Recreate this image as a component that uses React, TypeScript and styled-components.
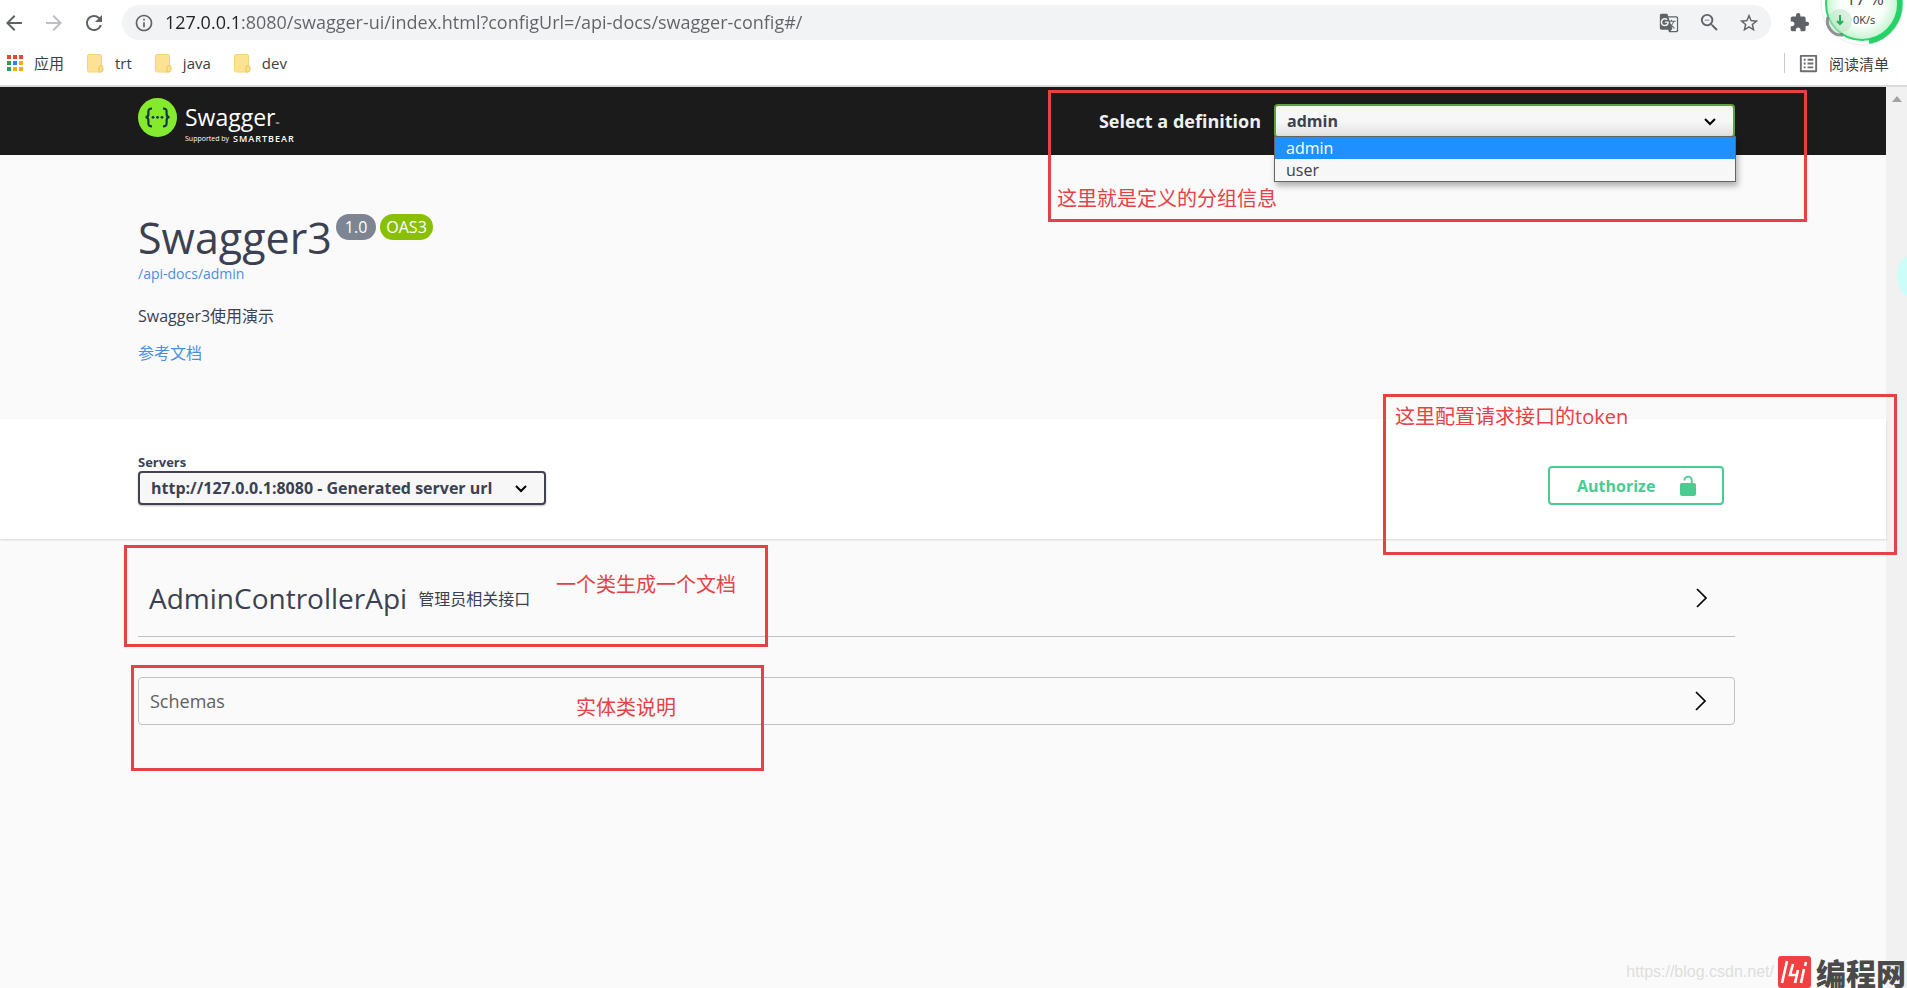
import React from 'react';
import styled, { createGlobalStyle } from 'styled-components';
import {
  MdArrowBack, MdArrowForward, MdRefresh, MdInfoOutline, MdGTranslate,
  MdOutlineZoomOut, MdStarBorder, MdExtension, MdListAlt,
} from 'react-icons/md';

const RED = '#e64145';

const GlobalStyle = createGlobalStyle`
  * { box-sizing: border-box; }
  html, body, #root { height: 100%; }
  body {
    margin: 0;
    overflow: hidden;
    background: #fafafa;
    color: #3b4151;
    font-family: "Open Sans", "Noto Sans CJK SC", sans-serif;
    font-size: 16px;
  }
  h1, h2, p, ul { margin: 0; padding: 0; font-weight: 400; }
  button, input, select { font: inherit; color: inherit; }
  a { color: #4990e2; text-decoration: none; }
`;

const Window = styled.div`
  position: relative;
  display: flex;
  flex-direction: column;
  height: 100%;
  overflow: hidden;
`;

const Chrome = styled.header`
  flex: none;
  background: #fff;
  border-bottom: 2px solid #d9dadc;
`;

const ToolbarRow = styled.div`
  display: flex;
  align-items: center;
  padding: 5px 98px 5px 4px;
`;

const IconButton = styled.button<{ $tone?: string; $gap?: number }>`
  display: flex;
  align-items: center;
  justify-content: center;
  width: 20px;
  height: 20px;
  padding: 0;
  margin-right: ${p => p.$gap ?? 0}px;
  border: 0;
  background: none;
  font-size: 20px;
  color: ${p => p.$tone ?? '#5f6368'};
  svg { flex: none; }
`;

const AddressBar = styled.div`
  flex: 1;
  display: flex;
  align-items: center;
  height: 35px;
  margin-right: 18px;
  padding: 0 12px;
  border-radius: 18px;
  background: #f1f3f4;
`;

const UrlInput = styled.input`
  flex: 1;
  min-width: 0;
  height: 26px;
  margin-bottom: 2px;
  padding: 0;
  border: 0;
  outline: 0;
  font-size: 18px;
  color: #5f6368;
  -webkit-text-fill-color: transparent;
  background: linear-gradient(90deg, #202124 0 77px, #5f6368 77px);
  -webkit-background-clip: text;
  background-clip: text;
`;

const BookmarkRow = styled.nav`
  display: flex;
  align-items: center;
  height: 40px;
  padding: 0 18px 4px 6px;
`;

const Bookmark = styled.a`
  display: flex;
  align-items: center;
  gap: 11px;
  margin-right: 23px;
  font-size: 15px;
  line-height: 20px;
  color: #3c4043;
`;

const ReadingList = styled.button`
  display: flex;
  align-items: center;
  gap: 9px;
  height: 20px;
  margin-left: auto;
  padding: 0 0 0 12px;
  border: 0;
  border-left: 1px solid #c8cacd;
  background: none;
  font-size: 15px;
  color: #3c4043;
  svg { color: #6b6e72; }
`;

const Meter = styled.svg`
  position: absolute;
  top: 0;
  right: 0;
  font-family: "Open Sans", sans-serif;
`;

const Viewport = styled.div`
  flex: 1;
  display: flex;
  min-height: 0;
`;

const Page = styled.main`
  flex: 1;
  min-width: 0;
  background: #fafafa;
`;

const Scrollbar = styled.div`
  flex: none;
  display: flex;
  justify-content: center;
  width: 21px;
  padding-top: 9px;
  background: #f1f1f1;
`;

const Section = styled.section`
  position: relative;
  padding: 0 151px 0 138px;
`;

const Topbar = styled(Section)`
  display: flex;
  align-items: center;
  justify-content: space-between;
  height: 68px;
  background: #1b1b1b;
`;

const Logo = styled.a`
  align-self: flex-start;
  display: flex;
  gap: 8px;
  padding-top: 11px;
  color: #fff;
`;

const LogoText = styled.span`
  display: flex;
  flex-direction: column;
  gap: 4px;
  padding-top: 6px;
`;

const LogoName = styled.span`
  height: 26px;
  font-size: 23px;
  line-height: 26px;
  small { font-size: 5px; line-height: 6px; }
`;

const LogoByline = styled.span`
  display: flex;
  align-items: center;
  gap: 4px;
  font-size: 7px;
  line-height: 9px;
  b { font-size: 9px; font-weight: 600; letter-spacing: 1px; }
`;

const DefinitionField = styled.div`
  display: flex;
  align-items: center;
  gap: 13px;
  label { font-size: 18px; font-weight: 700; line-height: 24px; color: #f0f0f0; }
`;

const SelectBox = styled.div<{ $width: number }>`
  position: relative;
  width: ${p => p.$width}px;
`;

const Select = styled.select<{ $edge: string; $shaded?: boolean }>`
  appearance: none;
  display: block;
  width: 100%;
  height: 34px;
  padding: 0 40px 0 11px;
  border: 2px solid ${p => p.$edge};
  border-radius: 4px;
  background: ${p => (p.$shaded ? 'linear-gradient(#f7f7f7 50%, #e2e2e2)' : '#f7f7f7')};
  box-shadow: 0 1px 2px rgba(0, 0, 0, 0.25);
  font-weight: 700;
  color: #3b4151;
`;

const SelectArrow = styled.svg`
  position: absolute;
  top: 14px;
  right: 19px;
  pointer-events: none;
`;

const Menu = styled.ul`
  position: absolute;
  z-index: 2;
  top: 32px;
  left: 0;
  right: -1px;
  list-style: none;
  border: 1px solid #646464;
  background: #f7f7f7;
  box-shadow: 2px 4px 6px rgba(0, 0, 0, 0.3);
`;

const MenuItem = styled.li<{ $active?: boolean }>`
  padding: 0 11px;
  line-height: 22px;
  color: ${p => (p.$active ? '#fff' : '#3b4151')};
  background: ${p => (p.$active ? '#1e90ff' : 'transparent')};
`;

const Info = styled(Section)`
  display: flex;
  flex-direction: column;
  align-items: flex-start;
  height: 264px;
  padding-top: 56px;
  line-height: 24px;
`;

const TitleRow = styled.div`
  display: flex;
  align-items: flex-start;
  gap: 4px;
  h1 { font-size: 43px; line-height: 53px; }
`;

const Badge = styled.span<{ $fill: string; $pad: number }>`
  margin-top: 3px;
  padding: 0 ${p => p.$pad}px;
  border-radius: 13px;
  background: ${p => p.$fill};
  line-height: 26px;
  color: #fff;
`;

const SpecLink = styled.a`
  margin-bottom: 20px;
  font-size: 14px;
  line-height: 20px;
`;

const Description = styled.p`
  margin-bottom: 13px;
`;

const SchemeBar = styled(Section)`
  display: flex;
  align-items: flex-start;
  justify-content: space-between;
  height: 120px;
  padding-top: 34px;
  background: #fff;
  box-shadow: 0 1px 2px rgba(0, 0, 0, 0.15);
`;

const ServerField = styled.div`
  label { display: block; font-size: 13px; font-weight: 700; line-height: 18px; }
`;

const AuthorizeButton = styled.button`
  display: flex;
  align-items: center;
  justify-content: space-between;
  width: 176px;
  height: 39px;
  margin: 13px 11px 0 0;
  padding: 0 26px 0 27px;
  border: 2px solid #49cc90;
  border-radius: 4px;
  background: transparent;
  font-weight: 700;
  color: #49cc90;
`;

const Operations = styled(Section)`
  padding-top: 24px;
`;

const TagRow = styled.button`
  display: flex;
  align-items: center;
  width: 100%;
  height: 74px;
  padding: 0 27px 3px 11px;
  border: 0;
  border-bottom: 1px solid #bfc1c5;
  background: none;
  text-align: left;
  svg { margin-left: auto; }
`;

const TagName = styled.span`
  margin-right: 11px;
  font-size: 28px;
  line-height: 40px;
`;

const Schemas = styled(Section)`
  padding-top: 40px;
`;

const SchemasBox = styled.button`
  display: flex;
  align-items: center;
  justify-content: space-between;
  width: 100%;
  height: 48px;
  padding: 0 27px 0 11px;
  border: 1px solid #bfc1c5;
  border-radius: 4px;
  background: none;
  font-size: 18px;
  color: #606060;
`;

/* Red review notes drawn over the page. */
const Note = styled.div<{ $x: number; $y: number; $w: number; $h: number; $px: number; $py: number; $right?: boolean }>`
  position: absolute;
  z-index: 3;
  top: ${p => p.$y}px;
  ${p => (p.$right ? 'right' : 'left')}: ${p => p.$x}px;
  width: ${p => p.$w}px;
  height: ${p => p.$h}px;
  padding: ${p => p.$py}px 0 0 ${p => p.$px}px;
  border: 3px solid ${RED};
  font-size: 20px;
  line-height: 30px;
  color: ${RED};
  pointer-events: none;
`;

const EdgeTab = styled.div`
  position: absolute;
  top: 253px;
  right: -32px;
  width: 42px;
  height: 46px;
  border-radius: 23px;
  background: #cdfdf8;
`;

const Watermark = styled.footer`
  position: absolute;
  right: 0;
  bottom: 0;
  display: flex;
  align-items: center;
  line-height: 32px;
`;

const WatermarkUrl = styled.span`
  margin-right: 4px;
  font-family: "Liberation Sans", sans-serif;
  font-size: 16px;
  color: #dedede;
`;

const WatermarkBrand = styled.span`
  padding: 0 1px 0 5px;
  font-family: "Noto Sans CJK SC", sans-serif;
  font-size: 30px;
  font-weight: 900;
  color: #4a4a4a;
`;

const FolderIcon = () => (
  <svg width="17" height="19" viewBox="0 0 17 19" aria-hidden="true">
    <rect x="0.5" y="0.5" width="14" height="17.5" rx="1.5" fill="#fde293" stroke="#f3d679" />
    <path d="M12 18v-4.500a2 2 0 0 1 4 0V16a2 2 0 0 1-2 2z" fill="#fbe08c" stroke="#eac55c" />
  </svg>
);

const AppsIcon = () => {
  const colors = ['#e8453c', '#e8453c', '#e8453c', '#2f9e5b', '#2f80ed', '#f0a92b', '#2f9e5b', '#f0a92b', '#f0a92b'];
  return (
    <svg width="17" height="18" viewBox="0 0 17 18" aria-hidden="true">
      {colors.map((c, i) => (
        <rect key={i} x={1 + (i % 3) * 6} y={1 + Math.floor(i / 3) * 6} width="4" height="4" fill={c} />
      ))}
    </svg>
  );
};

const Chevron = () => (
  <svg width="12" height="20" viewBox="0 0 12 20" fill="none" stroke="#000" strokeWidth="1.7" aria-hidden="true">
    <path d="M1 1l9 9-9 9" />
  </svg>
);

const DownArrow = () => (
  <SelectArrow width="12" height="8" viewBox="0 0 12 8" fill="none" stroke="#000" strokeWidth="2" aria-hidden="true">
    <path d="M1 1l5 5 5-5" />
  </SelectArrow>
);

const SwaggerMark = () => (
  <svg width="39" height="39" viewBox="0 0 39 39" fill="none" aria-hidden="true">
    <circle cx="19.5" cy="19.5" r="19.5" fill="#85ea2d" />
    <g stroke="#173647" strokeWidth="2.2">
      <path d="M14 10.500c-3 0-3.600.8-3.600 3v2.500c0 2-.7 3.200-2.900 3.200 2.200 0 2.900 1.200 2.900 3.200v2.800c0 2.300.6 3.100 3.600 3.100" />
      <path d="M25 10.500c3 0 3.600.8 3.600 3v2.500c0 2 .7 3.200 2.900 3.200-2.200 0-2.900 1.200-2.900 3.200v2.800c0 2.300-.6 3.100-3.600 3.100" />
    </g>
    <g fill="#173647">
      <circle cx="15" cy="19.300" r="1.400" />
      <circle cx="19.500" cy="19.300" r="1.400" />
      <circle cx="24" cy="19.300" r="1.400" />
    </g>
  </svg>
);

const LockIcon = () => (
  <svg width="16" height="22" viewBox="0 0 16 22" aria-hidden="true">
    <path d="M4.500 5.500V4.500a3.700 3.700 0 0 1 7.200 0V9" fill="none" stroke="#49cc90" strokeWidth="1.800" />
    <rect y="8" width="16" height="13" rx="2" fill="#49cc90" />
  </svg>
);

const SpeedMeter = () => (
  <Meter width="92" height="48" viewBox="1815 0 92 48" role="img" aria-label="Network speed">
    <defs>
      <radialGradient id="dial">
        <stop offset="0.6" stopColor="#fbfffb" />
        <stop offset="1" stopColor="#c4f4d0" />
      </radialGradient>
    </defs>
    <circle cx="1862" cy="4" r="41" fill="#fff" stroke="#ececec" />
    <circle cx="1862" cy="4" r="36" fill="url(#dial)" stroke="#2ed36b" strokeWidth="2" />
    <circle cx="1840" cy="21" r="12" fill="#bfe3c8" fillOpacity="0.55" />
    <path d="M1828 17a14 14 0 0 0 15 18" fill="none" stroke="#77777b" strokeOpacity="0.8" strokeWidth="3" />
    <path d="M1900 0a38.500 38.500 0 0 1-31 41.500" fill="none" stroke="#22d466" strokeWidth="5" />
    <path d="M1840 15v8M1837 21l3 3 3-3" fill="none" stroke="#22b35a" strokeWidth="2" />
    <text x="1853" y="24" fontSize="11" fill="#333">0K/s</text>
    <text x="1846" y="5" fontSize="17" fill="#444">17 %</text>
  </Meter>
);

const BrandMark = () => (
  <svg width="33" height="32" viewBox="0 0 33 32" aria-hidden="true">
    <rect width="33" height="32" rx="3" fill="#f23f3f" />
    <g fill="none" stroke="#fff" strokeWidth="2.600">
      <path d="M9 5L4 27M15 8l-3 11h7M20 14l-3 13M26 13l-3 14" />
      <path d="M28 6l-1 4" />
    </g>
  </svg>
);

export default function App() {
  return (
    <Window>
      <GlobalStyle />
      <Chrome>
        <ToolbarRow>
          <IconButton aria-label="Back" $gap={20}><MdArrowBack size={24} /></IconButton>
          <IconButton aria-label="Forward" $gap={20} $tone="#bcbec1"><MdArrowForward size={24} /></IconButton>
          <IconButton aria-label="Reload" $gap={18}><MdRefresh size={24} /></IconButton>
          <AddressBar>
            <IconButton aria-label="Site information" $gap={11}><MdInfoOutline /></IconButton>
            <UrlInput
              aria-label="Address"
              defaultValue="127.0.0.1:8080/swagger-ui/index.html?configUrl=/api-docs/swagger-config#/"
            />
            <IconButton aria-label="Translate" $gap={20}><MdGTranslate /></IconButton>
            <IconButton aria-label="Zoom" $gap={20}><MdOutlineZoomOut size={23} /></IconButton>
            <IconButton aria-label="Bookmark"><MdStarBorder size={22} /></IconButton>
          </AddressBar>
          <IconButton aria-label="Extensions"><MdExtension size={21} /></IconButton>
        </ToolbarRow>
        <BookmarkRow>
          <Bookmark href="#apps"><AppsIcon />应用</Bookmark>
          <Bookmark href="#trt"><FolderIcon />trt</Bookmark>
          <Bookmark href="#java"><FolderIcon />java</Bookmark>
          <Bookmark href="#dev"><FolderIcon />dev</Bookmark>
          <ReadingList><MdListAlt size={23} />阅读清单</ReadingList>
        </BookmarkRow>
      </Chrome>
      <SpeedMeter />

      <Viewport>
        <Page>
          <Topbar as="header">
            <Logo href="#">
              <SwaggerMark />
              <LogoText>
                <LogoName>Swagger<small>™</small></LogoName>
                <LogoByline>Supported by <b>SMARTBEAR</b></LogoByline>
              </LogoText>
            </Logo>
            <DefinitionField>
              <label htmlFor="definition">Select a definition</label>
              <SelectBox $width={461}>
                <Select id="definition" $edge="#62a03f" $shaded defaultValue="admin">
                  <option>admin</option>
                  <option>user</option>
                </Select>
                <DownArrow />
                <Menu role="listbox" aria-label="Definitions">
                  <MenuItem role="option" aria-selected $active>admin</MenuItem>
                  <MenuItem role="option" aria-selected={false}>user</MenuItem>
                </Menu>
              </SelectBox>
            </DefinitionField>
            <Note $right $x={79} $y={3} $w={759} $h={132} $px={6} $py={91}>这里就是定义的分组信息</Note>
          </Topbar>

          <Info>
            <TitleRow>
              <h1>Swagger3</h1>
              <Badge $fill="#7d8492" $pad={9}>1.0</Badge>
              <Badge $fill="#89bf04" $pad={6}>OAS3</Badge>
            </TitleRow>
            <SpecLink href="#spec">/api-docs/admin</SpecLink>
            <Description>Swagger3使用演示</Description>
            <a href="#docs">参考文档</a>
          </Info>

          <SchemeBar>
            <ServerField>
              <label htmlFor="server">Servers</label>
              <SelectBox $width={408}>
                <Select id="server" $edge="#41444e">
                  <option>http://127.0.0.1:8080 - Generated server url</option>
                </Select>
                <DownArrow />
              </SelectBox>
            </ServerField>
            <AuthorizeButton>Authorize<LockIcon /></AuthorizeButton>
            <Note $right $x={-11} $y={-25} $w={514} $h={161} $px={9} $py={5}>这里配置请求接口的token</Note>
          </SchemeBar>

          <Operations>
            <TagRow>
              <TagName>AdminControllerApi</TagName>
              管理员相关接口
              <Chevron />
            </TagRow>
            <Note $x={124} $y={6} $w={644} $h={102} $px={429} $py={22}>一个类生成一个文档</Note>
          </Operations>

          <Schemas>
            <SchemasBox>Schemas<Chevron /></SchemasBox>
            <Note $x={131} $y={28} $w={633} $h={106} $px={442} $py={25}>实体类说明</Note>
          </Schemas>
        </Page>
        <Scrollbar>
          <svg width="10" height="6" viewBox="0 0 10 6" aria-hidden="true"><path d="M0 6l5-6 5 6z" fill="#a3a3a3" /></svg>
        </Scrollbar>
      </Viewport>

      <EdgeTab />
      <Watermark>
        <WatermarkUrl>https://blog.csdn.net/</WatermarkUrl>
        <BrandMark />
        <WatermarkBrand>编程网</WatermarkBrand>
      </Watermark>
    </Window>
  );
}
